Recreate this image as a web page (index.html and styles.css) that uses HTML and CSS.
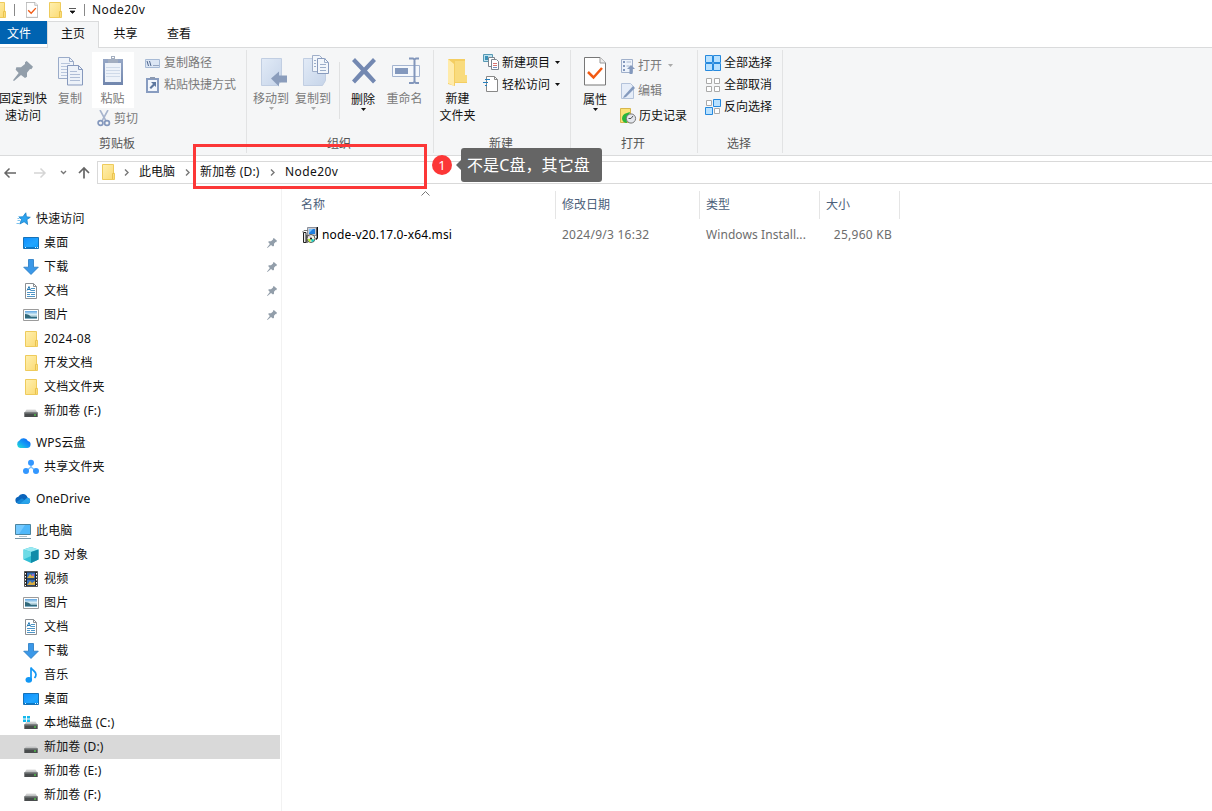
FILE: index.html
```html
<!DOCTYPE html>
<html lang="zh-CN">
<head>
<meta charset="utf-8">
<title>Node20v</title>
<link rel="stylesheet" href="styles.css">
</head>
<body>
<svg class="defs" aria-hidden="true">
  <defs>
    <linearGradient id="gFolder" x1="0" y1="0" x2="1" y2="1"><stop offset="0" stop-color="#fff0b0"/><stop offset="1" stop-color="#fbda72"/></linearGradient>
    <linearGradient id="gDesk" x1="0" y1="0" x2="1" y2="1"><stop offset="0" stop-color="#0d8eff"/><stop offset=".6" stop-color="#21a5ff"/><stop offset="1" stop-color="#079bff"/></linearGradient>
    <linearGradient id="gPale" x1="0" y1="0" x2="1" y2="1"><stop offset="0" stop-color="#e2ebf7"/><stop offset="1" stop-color="#c6d4e9"/></linearGradient>
    <linearGradient id="gClip" x1="0" y1="0" x2="0" y2="1"><stop offset="0" stop-color="#96a7c6"/><stop offset="1" stop-color="#7186ad"/></linearGradient>
    <linearGradient id="gDisk" x1="0" y1="0" x2="0" y2="1"><stop offset="0" stop-color="#dedede"/><stop offset="1" stop-color="#a9abad"/></linearGradient>
    <linearGradient id="gWps" x1="0" y1="1" x2="1" y2="0"><stop offset="0" stop-color="#24e6d0"/><stop offset=".45" stop-color="#159cf5"/><stop offset="1" stop-color="#0a5cf5"/></linearGradient>
    <linearGradient id="gPhoto" x1="0" y1="0" x2="0" y2="1"><stop offset="0" stop-color="#5ea5e2"/><stop offset=".45" stop-color="#d9eef5"/><stop offset="1" stop-color="#356d86"/></linearGradient>
  </defs>
  <symbol id="folder" viewBox="0 0 16 16"><path d="M2.500.5h11v8.800h1v6.200h-12z" fill="url(#gFolder)" stroke="#eecb5c"/><path d="M12.500 15V9.500h1.500" fill="none" stroke="#e9c24f"/></symbol>
  <symbol id="pin" viewBox="0 0 60 60"><path d="M41 0L60 17 55 25 51 24 42 35 42 47 36 51 24 42 3 60 0 58 17 36 8 26 10 19 24 19 36 9 36 4Z" fill="#929eaa"/></symbol>
  <symbol id="star" viewBox="0 0 16 16"><path d="M10.800 1.800l.6 4 3.900.5-3.400 2.300.7 4.900-3.500-2.800-4.300 2.300 1.700-4.500-2.500-2.600 3.900-.1z" fill="#2ba3f0" stroke="#1b80c6" stroke-width=".8"/><path d="M3.500 5.500h2M2.500 7.500h2M2.500 9.500h2.500M1.500 12.500h3" stroke="#7cc3ee"/></symbol>
  <symbol id="desktop" viewBox="0 0 16 16"><path d="M.5 2.500h15v11H.5z" fill="url(#gDesk)" stroke="#1672b8"/><path d="M1 12.500h14" stroke="#0879c8"/><path d="M2 12.500h1M12 12.500h1M14 12.500h1" stroke="#d8f2ff"/></symbol>
  <symbol id="down" viewBox="0 0 16 16"><path d="M5.500.5h5v7.700h4.800L8 15.500.7 8.200h4.800z" fill="#3b98e8" stroke="#2478c2" stroke-width=".8"/></symbol>
  <symbol id="doc" viewBox="0 0 16 16"><path d="M2.500.5h8l3 3v12h-11z" fill="#fff" stroke="#8b8f93"/><path d="M10.500.5v3h3" fill="none" stroke="#8b8f93"/><path d="M8 5.500h4M8 7.500h4M4 9.500h8M4 11.500h3M8 11.500h4M4 13.500h8" stroke="#4f95c6"/><path d="M4 7.500l2-4 1.500 4M4.500 6.500h3" stroke="#277bb5" fill="none"/></symbol>
  <symbol id="photo" viewBox="0 0 16 16"><path d="M.5 2.500h15v11H.5z" fill="#fff" stroke="#9b9b9b"/><path d="M2 4h12v8H2z" fill="url(#gPhoto)"/><path d="M2 7q4 0 6 3l6 0v1H2z" fill="#30687a"/><path d="M2 11h12v1H2z" fill="#81afc5"/></symbol>
  <symbol id="disk" viewBox="0 0 16 16"><path d="M3.500 6.500h9l2.200 3.500H1.300z" fill="url(#gDisk)"/><path d="M1.300 9.500h13.400v4.500H1.300z" fill="#494c4d"/><path d="M1.300 10h13.400" stroke="#7e8283"/><path d="M11 12h2" stroke="#55f34b"/></symbol>
  <symbol id="cdisk" viewBox="0 0 16 16"><use href="#disk"/><path d="M0 1h3v2.500H0zM4 1h3v2.500H4zM0 4.500h3V7H0zM4 4.500h3V7H4z" fill="#14b8ec"/></symbol>
  <symbol id="wps" viewBox="0 0 16 16"><path d="M5 13a4 4 0 0 1-.5-7.500 4.800 4.800 0 0 1 8.400.6A3.500 3.500 0 0 1 12 13z" fill="url(#gWps)"/></symbol>
  <symbol id="share" viewBox="0 0 16 16"><path d="M8 5v4M8 8l-5 4M8 8l5 4" stroke="#7cc0fb" stroke-width="1.500"/><circle cx="8" cy="3.800" r="3" fill="#3397ff"/><circle cx="3" cy="12" r="3" fill="#3397ff"/><circle cx="13" cy="12" r="3" fill="#3397ff"/></symbol>
  <symbol id="onedrive" viewBox="0 0 16 16"><path d="M3.500 12.800A3.600 3.600 0 0 1 3.300 5.700 5 5 0 0 1 12.500 6.400 3.300 3.300 0 0 1 12.800 12.800z" fill="#0b64bb"/><path d="M1 11.300L7 7.300l7 5.300-1 .2H3.500z" fill="#1687d6"/><path d="M5 12.800L12.500 6.400a3.300 3.300 0 0 1 .3 6.400z" fill="#29a4ea"/></symbol>
  <symbol id="pc" viewBox="0 0 16 16"><path d="M.5 1.500h15v10H.5z" fill="#50b8fa" stroke="#4c849f"/><path d="M1 2h9L4 11H1z" fill="#74c9ff"/><path d="M4 13.500h8" stroke="#aebfc8"/><path d="M0 15.500h16" stroke="#7795a6"/></symbol>
  <symbol id="cube" viewBox="0 0 16 16"><path d="M8 0l7.500 2.500v10L8 16 .5 12.500v-10z" fill="#31bfd5"/><path d="M8 0l7.500 2.500L8 5 .5 2.500z" fill="#9beaf2"/><path d="M8 5l7.500-2.500v10L8 16z" fill="#118ca9"/><path d="M.5 2.500L8 5v4L.5 12.500z" fill="#6ddbe6"/></symbol>
  <symbol id="video" viewBox="0 0 16 16"><path d="M1.500.5h13v15h-13z" fill="#222" stroke="#555"/><path d="M2.500 2v13M13.500 2v13" stroke="#fff" stroke-dasharray="1.500 1.500"/><path d="M4 1.500h8v6H4zM4 8.500h8v6H4z" fill="#356fba"/><path d="M5 6l2-3 2 2 2-2v4H4zM5 13l2-3 2 2 3-2v4H4z" fill="#d9ad42"/><path d="M9 3h2v2H9z" fill="#a36cc0"/></symbol>
  <symbol id="music" viewBox="0 0 16 16"><ellipse cx="5.800" cy="12.800" rx="3.300" ry="2.900" fill="#1197f5"/><path d="M8 12.500V.5c1 3 5 3.500 5 7 0 1.500-.6 2.500-1.500 3.500" fill="none" stroke="#1197f5" stroke-width="1.700"/></symbol>
  <symbol id="pages" viewBox="0 0 26 29"><path d="M.5.500h11l4 4v17H.5z" fill="#f0f4fa" stroke="#9aabc9"/><path d="M11.500.500v4h4" fill="none" stroke="#9aabc9"/><path d="M3 6.500h9M3 9.500h10M3 12.500h10M3 15.500h10M3 18.500h8" stroke="#b8c6dd"/><path d="M9.500 8.500h11l4 4v15.500h-15z" fill="#edf2f9" stroke="#8799bd"/><path d="M20.500 8.500v4h4" fill="none" stroke="#8799bd"/><path d="M12 14.500h7M12 17.500h10M12 20.500h10M12 23.500h10" stroke="#afbdd6"/></symbol>
  <symbol id="bigcheck" viewBox="0 0 22 29"><path d="M.5.5h15.500l5.500 5.500v22H.5z" fill="#fff" stroke="#777"/><path d="M16 .5V6h5.500" fill="#eee" stroke="#999"/><path d="M4 15l5.500 5.500L18 11" fill="none" stroke="#f25a13" stroke-width="2.500"/></symbol>
  <symbol id="tri" viewBox="0 0 5 3"><path d="M0 0h5L2.500 3z" fill="currentColor"/></symbol>
</svg>

<header class="titlebar">
  <svg class="quick-folder first"><use href="#folder"/></svg>
  <i class="title-sep a"></i>
  <svg class="quick-check"><use href="#bigcheck"/></svg>
  <svg class="quick-folder"><use href="#folder"/></svg>
  <svg class="quick-more" viewBox="0 0 7 6"><path d="M0 .5h7M1 3h5L3.500 5.500z" fill="#111" stroke="#111" stroke-width=".7"/></svg>
  <i class="title-sep b"></i>
  <span class="title">Node20v</span>
</header>
<nav class="tabs"><span class="tab file">文件</span><span class="tab home">主页</span><span class="tab share">共享</span><span class="tab view">查看</span></nav>

<section class="ribbon">
  <div class="group clipboard">
    <div class="body">
      <div class="big pinbtn"><span class="pic"><svg width="20" height="20"><use href="#pin"/></svg></span><span>固定到快<br>速访问</span></div>
      <div class="big copy dim"><span class="pic"><svg width="26" height="29"><use href="#pages"/></svg></span><span>复制</span></div>
      <div class="pastecol">
        <div class="big paste dim"><span class="pic"><svg width="20" height="30" viewBox="0 0 20 30"><path d="M0 3h20v26H0z" fill="url(#gClip)"/><path d="M2 7h16v19H2z" fill="#edf2f9"/><path d="M3 11.500h14M3 14.500h14M3 17.500h14M3 20.500h14" stroke="#cfdae9"/><path d="M5 3h3V0h4v3h3v4H5z" fill="#a3aec0"/><path d="M9 1.500h2" stroke="#fff"/></svg></span><span>粘贴</span></div>
        <div class="small cut dim"><svg width="14" height="17" viewBox="0 0 14 17"><path d="M3 0l6 11M11 0L5 11" stroke="#a7b4cd" stroke-width="1.600"/><circle cx="3.500" cy="13" r="2.400" fill="none" stroke="#8498bd" stroke-width="1.700"/><circle cx="10" cy="13" r="2.400" fill="none" stroke="#8498bd" stroke-width="1.700"/></svg><span>剪切</span></div>
      </div>
      <div class="stack paths dim">
        <div class="small"><svg width="15" height="16" viewBox="0 0 15 16"><path d="M.5 4.500h14v8H.5z" fill="#dce6f4" stroke="#a7bad5"/><path d="M2 6l1.500 5M4.500 6l1.500 5M8.500 10.500h1M10.500 10.500h1M12.500 10.500h1" stroke="#50678e"/></svg><span>复制路径</span></div>
        <div class="small"><svg width="15" height="16" viewBox="0 0 15 16"><path d="M1 1h13v15H1z" fill="#889cc0"/><path d="M3 3h9v11H3z" fill="#f2f6fc"/><path d="M5 0h5v2H5z" fill="#8c9ab1"/><path d="M6 5h5v5L9.500 8.500 6 12 4.500 10.500 8 7z" fill="#5e789f"/></svg><span>粘贴快捷方式</span></div>
      </div>
    </div>
    <div class="label">剪贴板</div>
  </div>

  <div class="group organize">
    <div class="body">
      <div class="big move dim"><span class="pic"><svg width="26" height="29" viewBox="0 0 26 29"><path d="M.5.500h20v22l-4 5H.5z" fill="url(#gPale)" stroke="#c1cee2"/><path d="M10 20.500l8-7v4h8v7h-8v4z" fill="#8b9dbc"/></svg></span><span>移动到</span><svg class="tri"><use href="#tri"/></svg></div>
      <div class="big copyto dim"><span class="pic"><svg width="27" height="32" viewBox="0 0 27 32"><path d="M.5 3.500h22v22l-3 5H.5z" fill="url(#gPale)" stroke="#c1cee2"/><path d="M9.500.5h7l3 3v13h-10z" fill="#f2f6fb" stroke="#a0afc9"/><path d="M14.500 3.500h7l4 4v11h-11z" fill="#f2f6fb" stroke="#899bbd"/><path d="M21.500 3.500v4h4M17 9.500h6M17 12.500h6M17 15.500h6M11 5.500h2M11 8.500h2M11 11.500h2" fill="none" stroke="#9caeca"/></svg></span><span>复制到</span><svg class="tri"><use href="#tri"/></svg></div>
      <i class="inner-sep"></i>
      <div class="big delete"><span class="pic"><svg width="26" height="26" viewBox="0 0 26 26"><path d="M1 3l3-3 9 9.500L22 0l3 3-9 9.500 9 10-3 3-9-9.500-9 9.500-3-3 9-10z" fill="#7388b1"/></svg></span><span>删除</span><svg class="tri"><use href="#tri"/></svg></div>
      <div class="big rename dim"><span class="pic"><svg width="28" height="28" viewBox="0 0 28 28"><path d="M.5 8.500h27v11H.5z" fill="#f5f8fc" stroke="#a4b4d0"/><path d="M3 11h13v6H3z" fill="#8398bd"/><path d="M17 1.500h4l1.500 1 1.500-1h3M22.500 2v23M17 26h4l1.500-1 1.500 1h3" fill="none" stroke="#8296bb" stroke-width="2"/></svg></span><span>重命名</span></div>
    </div>
    <div class="label">组织</div>
  </div>

  <div class="group new">
    <div class="body">
      <div class="big newfolder"><span class="pic"><svg width="19" height="28" viewBox="0 0 19 28"><path d="M0 0h17v16l2 2v6H7v3L0 25z" fill="#f4ce62"/><path d="M7 2h10v14h2v7H7z" fill="#f9db7d"/><path d="M0 0l6 5v22l-6-3z" fill="#ffebaa"/></svg></span><span>新建<br>文件夹</span></div>
      <div class="stack newitems">
        <div class="small"><svg width="16" height="17" viewBox="0 0 16 17"><path d="M.5.500h9v7h-9z" fill="#bde2ef" stroke="#5799b4"/><path d="M2 2h3v4H2z" fill="#3c91b7"/><path d="M5.500 3.500h6v9h-6z" fill="#fff" stroke="#7c858e"/><path d="M8.500 5.500h5l2 2v8h-7z" fill="#fff" stroke="#7c858e"/><path d="M10 9.500h4M10 11.500h4" stroke="#d77572"/><path d="M10 13.500h4" stroke="#748fbc"/></svg><span>新建项目</span><svg class="tri"><use href="#tri"/></svg></div>
        <div class="small"><svg width="16" height="17" viewBox="0 0 16 17"><path d="M3.500.5h8l3 3v12h-11z" fill="#fff" stroke="#888"/><path d="M11.500.5v3h3" fill="none" stroke="#888"/><path d="M2 3.500h5M0 6.500h5M2 9.500h2" stroke="#247fbd" stroke-width="1.200"/></svg><span>轻松访问</span><svg class="tri"><use href="#tri"/></svg></div>
      </div>
    </div>
    <div class="label">新建</div>
  </div>

  <div class="group open">
    <div class="body">
      <div class="big property"><span class="pic"><svg width="22" height="29"><use href="#bigcheck"/></svg></span><span>属性</span><svg class="tri"><use href="#tri"/></svg></div>
      <div class="stack opens">
        <div class="small dim"><svg width="16" height="16" viewBox="0 0 16 16"><path d="M1.500 1.500h11v13h-11z" fill="#edf3fb" stroke="#a0b0cb"/><path d="M3 4h2M3 8h2M3 12h2" stroke="#8297bc" stroke-width="2"/><path d="M6.500 4h4.500M6.500 8h3" stroke="#a9b9d2"/><path d="M7 11l4-4 4 4h-2.500v5h-3v-5z" fill="#8499bd"/></svg><span>打开</span><svg class="tri"><use href="#tri"/></svg></div>
        <div class="small dim"><svg width="16" height="16" viewBox="0 0 16 16"><path d="M1.500.500h9l3 3v12h-12z" fill="#e6edf8" stroke="#b4c3da"/><path d="M4 13L13 3l2 2-9 9-3 1z" fill="#849abd"/></svg><span>编辑</span></div>
        <div class="small"><svg width="17" height="16" viewBox="0 0 17 16"><path d="M.5.500h10v14H.5z" fill="#fbe276" stroke="#d7b64d"/><path d="M2 11q0-5 5-6l3-1-1 3q-3 1-2 8-4 0-5-4z" fill="#28b63c"/><circle cx="11" cy="10.500" r="4.600" fill="#e4e7ed" stroke="#777"/><path d="M11 10.500L13 8M11 10.500H8.500" fill="none" stroke="#555"/></svg><span>历史记录</span></div>
      </div>
    </div>
    <div class="label">打开</div>
  </div>

  <div class="group select">
    <div class="body">
      <div class="stack selects">
        <div class="small"><svg width="16" height="16" viewBox="0 0 16 16"><path d="M.5.500h7v7h-7zM8.500.5h7v7h-7zM.5 8.500h7v7h-7zM8.500 8.500h7v7h-7z" fill="#b8e1ff" stroke="#2689dd"/></svg><span>全部选择</span></div>
        <div class="small"><svg width="16" height="16" viewBox="0 0 16 16"><path d="M1.500 1.500h5v5h-5zM9.500 1.500h5v5h-5zM1.500 9.500h5v5h-5zM9.500 9.500h5v5h-5z" fill="#fff" stroke="#aaa"/></svg><span>全部取消</span></div>
        <div class="small"><svg width="16" height="16" viewBox="0 0 16 16"><path d="M1.500 1.500h5v5h-5zM9.500 9.500h5v5h-5z" fill="#fff" stroke="#aaa"/><path d="M8.500.5h7v7h-7zM.5 8.500h7v7h-7z" fill="#b8e1ff" stroke="#2689dd"/></svg><span>反向选择</span></div>
      </div>
    </div>
    <div class="label">选择</div>
  </div>
</section>

<section class="addressbar">
  <div class="nav-icons">
    <svg width="96" height="22" viewBox="0 0 96 22" fill="none"><path d="M5 12h11M9.500 7.500L5 12l4.500 4.500" stroke="#666" stroke-width="1.500"/><path d="M34 12h11M40.500 7.500L45 12l-4.500 4.500" stroke="#d5d5d5" stroke-width="1.500"/><path d="M61 10l2.500 2.500L66 10" stroke="#777" stroke-width="1.400"/><path d="M84 17.500V7M79 12l5-5 5 5" stroke="#666" stroke-width="1.700"/></svg>
  </div>
  <div class="path">
    <svg class="path-folder"><use href="#folder"/></svg>
    <svg class="chev" viewBox="0 0 5 7"><path d="M1 .5l3 3-3 3"/></svg><span class="crumb pc">此电脑</span>
    <svg class="chev" viewBox="0 0 5 7"><path d="M1 .5l3 3-3 3"/></svg><span class="crumb drive">新加卷 (D:)</span>
    <svg class="chev" viewBox="0 0 5 7"><path d="M1 .5l3 3-3 3"/></svg><span class="crumb last">Node20v</span>
  </div>
</section>

<main class="content">
  <aside class="tree">
    <div class="node root"><svg><use href="#star"/></svg><span>快速访问</span></div>
    <div class="node"><svg><use href="#desktop"/></svg><span>桌面</span><svg class="mini-pin"><use href="#pin"/></svg></div>
    <div class="node"><svg><use href="#down"/></svg><span>下载</span><svg class="mini-pin"><use href="#pin"/></svg></div>
    <div class="node"><svg><use href="#doc"/></svg><span>文档</span><svg class="mini-pin"><use href="#pin"/></svg></div>
    <div class="node"><svg><use href="#photo"/></svg><span>图片</span><svg class="mini-pin"><use href="#pin"/></svg></div>
    <div class="node"><svg><use href="#folder"/></svg><span class="wide">2024-08</span></div>
    <div class="node"><svg><use href="#folder"/></svg><span>开发文档</span></div>
    <div class="node"><svg><use href="#folder"/></svg><span>文档文件夹</span></div>
    <div class="node"><svg><use href="#disk"/></svg><span>新加卷 (F:)</span></div>
    <div class="node root gap"><svg><use href="#wps"/></svg><span>WPS云盘</span></div>
    <div class="node"><svg><use href="#share"/></svg><span>共享文件夹</span></div>
    <div class="node root gap"><svg><use href="#onedrive"/></svg><span>OneDrive</span></div>
    <div class="node root gap"><svg><use href="#pc"/></svg><span>此电脑</span></div>
    <div class="node"><svg><use href="#cube"/></svg><span class="wide">3D 对象</span></div>
    <div class="node"><svg><use href="#video"/></svg><span>视频</span></div>
    <div class="node"><svg><use href="#photo"/></svg><span>图片</span></div>
    <div class="node"><svg><use href="#doc"/></svg><span>文档</span></div>
    <div class="node"><svg><use href="#down"/></svg><span>下载</span></div>
    <div class="node"><svg><use href="#music"/></svg><span>音乐</span></div>
    <div class="node"><svg><use href="#desktop"/></svg><span>桌面</span></div>
    <div class="node"><svg><use href="#cdisk"/></svg><span>本地磁盘 (C:)</span></div>
    <div class="node selected"><svg><use href="#disk"/></svg><span>新加卷 (D:)</span></div>
    <div class="node"><svg><use href="#disk"/></svg><span>新加卷 (E:)</span></div>
    <div class="node"><svg><use href="#disk"/></svg><span>新加卷 (F:)</span></div>
  </aside>
  <section class="files">
    <div class="columns head"><span class="name">名称</span><span>修改日期</span><span>类型</span><span>大小</span>
      <svg class="sort" viewBox="0 0 9 5"><path d="M.5 4.500l4-4 4 4" fill="none" stroke="#777"/></svg>
    </div>
    <div class="columns row"><span class="name"><svg width="16" height="16" viewBox="0 0 16 16"><path d="M5.500.5h9v8h-9z" fill="#c9ccd4" stroke="#8b8f99"/><path d="M7 2h6v5H7z" fill="#1f7fe0"/><path d="M7 2h4L7 6z" fill="#7cc4ff"/><path d="M15.300 0v11l-1.500 1.500" stroke="#111" stroke-width="1.400" fill="none"/><path d="M1.500 5.500h2.500v10H1.500z" fill="#e8e8e8" stroke="#222"/><path d="M0 5.500l2-2h4" stroke="#777" fill="none"/><path d="M5 8v8" stroke="#111"/><circle cx="9" cy="11.500" r="4" fill="#f0f3e4" stroke="#555"/><path d="M9 11.500l3.800 1.500-3 2.500z" fill="#16c9bd"/><path d="M9 11.500l-3.500 1 2.500 3z" fill="#b6e821"/><path d="M9 11.500L6 9h3z" fill="#e2c0ee"/><circle cx="9" cy="11.500" r="1" fill="#111"/></svg><span class="filename">node-v20.17.0-x64.msi</span></span><span>2024/9/3 16:32</span><span class="kind">Windows Install...</span><span class="size">25,960 KB</span></div>
  </section>
</main>

<div class="mark-box"></div>
<div class="mark-number">1</div>
<div class="mark-tip">不是C盘，其它盘</div>
</body>
</html>
```
FILE: styles.css
```css
* { box-sizing: border-box; }
body {
  margin: 0;
  width: 1212px;
  height: 811px;
  overflow: hidden;
  position: relative;
  background: #fff;
  color: #111;
  font: 12px/17px "Noto Sans", "Noto Sans CJK SC", sans-serif;
}
svg { display: block; flex: none; }
.defs { position: absolute; width: 0; height: 0; }

.titlebar { height: 21px; display: flex; align-items: center; padding-bottom: 1px; overflow: hidden; }
.quick-folder { width: 16px; height: 16px; }
.quick-folder.first { margin-left: -9px; }
.title-sep { width: 1px; height: 12px; background: #888; }
.title-sep.a { margin-left: 7px; }
.quick-check { width: 12px; height: 16px; margin: 0 9px 0 11px; }
.quick-more { width: 7px; height: 6px; margin: 2px 0 0 6px; }
.title-sep.b { margin: 0 7px 0 8px; }
.title { letter-spacing: .4px; padding-bottom: 2px; }

.tabs { height: 27px; display: flex; border-bottom: 1px solid #dadbdc; line-height: 25px; text-align: center; }
.tab.file { width: 47px; height: 23px; padding-right: 9px; background: #0063b1; color: #fff; }
.tab.home { width: 52px; height: 27px; border: 1px solid #dadbdc; border-bottom: 0; background: #f5f6f7; line-height: 23px; }
.tab.share { width: 53px; }
.tab.view { width: 54px; }

.ribbon { height: 108px; display: flex; background: #f5f6f7; border-bottom: 1px solid #dadbdc; padding-top: 2px; }
.group { height: 103px; border-right: 1px solid #e2e3e4; display: flex; flex-direction: column; }
.body { height: 85px; display: flex; align-items: flex-start; }
.label { text-align: center; color: #555; padding-right: 2px; }
.clipboard { width: 247px; }
.clipboard .label { padding-right: 12px; }
.organize { width: 187px; }
.new { width: 137px; }
.open { width: 127px; }
.select { width: 85px; }
.big { display: flex; flex-direction: column; align-items: center; text-align: center; padding-top: 2px; white-space: nowrap; flex: none; }
.pic { height: 38px; display: flex; align-items: center; justify-content: center; }
.dim { color: #7a7a7a; }
.tri { width: 5px; height: 3px; }
.big .tri { margin-top: 0; }
.dim .tri { color: #aaa; }
.pinbtn { width: 46px; }
.copy { width: 46px; padding-left: 2px; }
.copy .pic { padding: 1px 0 0 2px; }
.paste { width: 42px; height: 56px; background: #fff; margin-top: 2px; padding: 0 1px 0 0; }
.pastecol { width: 53px; display: flex; flex-direction: column; }
.small { display: flex; align-items: center; gap: 4px; white-space: nowrap; }
.cut { margin-top: 2px; padding-left: 5px; gap: 3px; }
.stack { display: flex; flex-direction: column; }
.paths { padding-top: 4px; gap: 5px; }
.move { width: 42px; margin-left: 3px; }
.move .pic { padding: 2px 0 0 6px; }
.copyto { width: 42px; }
.copyto .pic { padding: 0 0 0 6px; }
.inner-sep { width: 1px; height: 57px; margin-top: 12px; background: #e0e1e2; margin-left: 5px; }
.delete { width: 46px; }
.delete .pic, .property .pic { height: 39px; padding-bottom: 1px; }
.delete .pic { padding-left: 1px; }
.rename { width: 37px; }
.rename .pic { padding-left: 2px; }
.newfolder { width: 48px; padding-right: 1px; }
.newfolder .pic { padding-top: 3px; padding-right: 1px; }
.newitems { padding-top: 4px; gap: 5px; margin-left: 1px; }
.newitems .small { gap: 3px; }
.newitems .tri { margin-left: 2px; }
.property { width: 48px; }
.opens { padding-top: 7px; gap: 8px; margin-left: 1px; }
.opens .small { gap: 2px; }
.opens .tri { margin-left: 4px; }
.selects { padding: 4px 0 0 7px; gap: 5px; }
.selects .small { gap: 3px; }

.addressbar { height: 33px; display: flex; padding-top: 5px; }
.nav-icons { width: 97px; }
.path { flex: 1; height: 23px; display: flex; align-items: center; border: 1px solid #d9d9d9; border-right: 0; padding: 0 0 1px 2px; }
.path-folder { width: 16px; height: 16px; margin-right: 8px; }
.chev { width: 5px; height: 7px; fill: none; stroke: #777; stroke-width: 1.4; }
.crumb { margin-left: 10px; letter-spacing: .15px; white-space: nowrap; padding-bottom: 1px; }
.crumb.pc { width: 46px; letter-spacing: 0; }
.crumb.drive { width: 70px; }
.crumb.last { letter-spacing: .4px; }

.content { height: 622px; display: flex; }
.tree { width: 282px; padding-top: 18px; border-right: 1px solid #f2f2f2; }
.node { width: 280px; height: 24px; padding-left: 23px; display: flex; align-items: center; gap: 5px; white-space: nowrap; letter-spacing: .15px; }
.node span { padding-bottom: 1px; }
.node .wide { letter-spacing: .3px; }
.node svg { width: 16px; height: 16px; }
.node.root { padding-left: 15px; }
.node.gap { margin-top: 8px; }
.node.selected { background: #d9d9d9; }
.node .mini-pin { width: 10px; height: 10px; margin-left: auto; margin-right: 3px; }
.files { padding-top: 2px; }
.columns { display: grid; grid-template-columns: 274px 144px 120px 80px; position: relative; }
.columns > span { padding-left: 6px; white-space: nowrap; }
.head { height: 28px; color: #4c607a; line-height: 27px; }
.head span { border-right: 1px solid #e5e5e5; }
.columns.head > .name { padding-left: 19px; }
.sort { position: absolute; left: 139px; top: 0; width: 9px; height: 5px; }
.row { height: 32px; line-height: 31px; color: #6d6d6d; letter-spacing: .25px; }
.columns.row > .name { height: 31px; padding-left: 20px; display: flex; align-items: center; gap: 4px; color: #000; }
.filename { letter-spacing: .16px; padding-bottom: 1px; }
.kind { letter-spacing: .08px; }
.row .size { text-align: right; padding-right: 8px; }

.mark-box { position: absolute; left: 193px; top: 144px; width: 234px; height: 45px; border: 3px solid #fc3737; }
.mark-number { position: absolute; left: 432px; top: 155px; width: 20px; height: 20px; border-radius: 50%; background: #fc3737; color: #fff; font-size: 13px; line-height: 20px; text-align: center; }
.mark-tip { position: absolute; left: 461px; top: 148px; width: 141px; height: 34px; border-radius: 3px; background: #656565; color: #fff; font-size: 16px; line-height: 34px; letter-spacing: .1px; padding-left: 6px; white-space: nowrap; }
.mark-tip::before { content: ""; position: absolute; left: -5px; top: 12px; border: 5px solid transparent; border-left: 0; border-right-color: #656565; }
```
